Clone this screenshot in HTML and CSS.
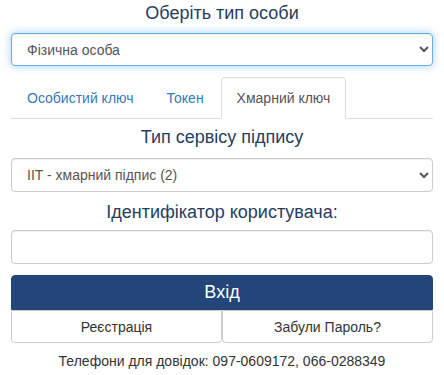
FILE: index.html
```html
<!DOCTYPE html>
<html lang="uk">
<head>
  <meta charset="UTF-8">
  <meta name="viewport" content="width=device-width, initial-scale=1.0">
  <title>Вхід</title>
  <link rel="stylesheet" href="styles.css">
</head>
<body>
  <div class="login">
    <h3 class="title">Оберіть тип особи</h3>
    <select class="form-control focused">
      <option>Фізична особа</option>
      <option>Юридична особа</option>
    </select>

    <ul class="tabs">
      <li><a href="#">Особистий ключ</a></li>
      <li><a href="#">Токен</a></li>
      <li class="active"><a href="#">Хмарний ключ</a></li>
    </ul>

    <h3 class="title title-sub">Тип сервісу підпису</h3>
    <select class="form-control">
      <option>IIT - хмарний підпис (2)</option>
    </select>

    <h3 class="title title-id">Ідентифікатор користувача:</h3>
    <input type="text" class="form-control">

    <button class="btn-login">Вхід</button>
    <div class="btn-row">
      <button class="btn-light left">Реєстрація</button>
      <button class="btn-light right">Забули Пароль?</button>
    </div>

    <p class="phones">Телефони для довідок: 097-0609172, 066-0288349</p>
  </div>
</body>
</html>
```

FILE: styles.css
```css
* {
  box-sizing: border-box;
}
body {
  margin: 0;
  padding: 0;
  font-family: "Liberation Sans", Arial, sans-serif;
  font-size: 14px;
  color: #333;
  background-color: #fff;
}
.login {
  padding: 0 11px;
}
.title {
  margin: 0 0 7px;
  font-size: 18px;
  font-weight: normal;
  line-height: 26px;
  text-align: center;
  color: #263d60;
}
.title-sub {
  margin: 5px 0 8px;
}
.title-id {
  margin: 7px 0 5px;
}
.form-control {
  display: block;
  width: 100%;
  height: 34px;
  padding: 6px 12px;
  font-family: inherit;
  font-size: 14px;
  color: #555;
  background-color: #fff;
  border: 1px solid #ccc;
  border-radius: 4px;
  box-shadow: inset 0 1px 1px rgba(0, 0, 0, .075);
  outline: none;
}
select.form-control {
  padding-left: 11px;
}
.form-control.focused {
  height: 33px;
  border-color: #66afe9;
  box-shadow: inset 0 1px 1px rgba(0, 0, 0, .075), 0 0 8px rgba(102, 175, 233, .6);
}
.tabs {
  list-style: none;
  margin: 11px 0 0;
  padding: 0;
  display: flex;
  border-bottom: 1px solid #ddd;
}
.tabs li {
  margin-bottom: -1px;
}
.tabs li a {
  display: block;
  margin-right: 1px;
  padding: 10px 15px;
  line-height: 20px;
  color: #337ab7;
  text-decoration: none;
  border: 1px solid transparent;
  border-radius: 4px 4px 0 0;
}
.tabs li.active a {
  color: #555;
  background-color: #fff;
  border-color: #ddd #ddd transparent;
}
.btn-login {
  display: block;
  width: 100%;
  height: 35px;
  margin-top: 11px;
  font-family: inherit;
  font-size: 18px;
  color: #fff;
  background-color: #234577;
  border: 1px solid #234577;
  border-radius: 4px 4px 0 0;
}
.btn-row {
  display: flex;
}
.btn-light {
  flex: 1;
  height: 33px;
  font-family: inherit;
  font-size: 14px;
  color: #333;
  background-color: #fff;
  border: 1px solid #ccc;
  border-radius: 0 0 4px 4px;
}
.btn-light.left {
  flex: 0 0 211px;
}
.phones {
  margin: 8px 0 0;
  font-size: 14px;
  line-height: 20px;
  text-align: center;
  color: #333;
}
```
